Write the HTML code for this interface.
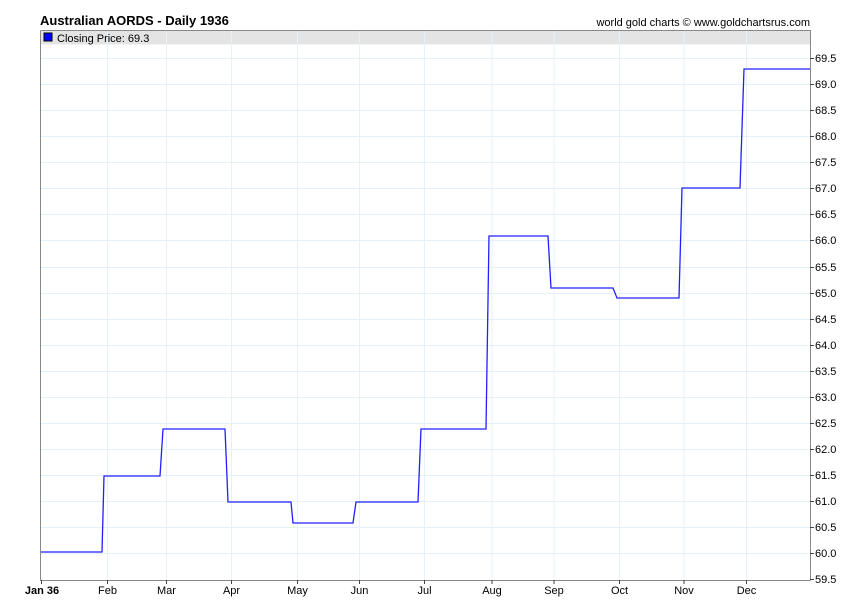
<!DOCTYPE html>
<html><head><meta charset="utf-8"><style>
html,body{margin:0;padding:0;background:#fff;}
svg{display:block;font-family:"Liberation Sans",Arial,sans-serif;}
</style></head><body>
<svg width="850" height="616" viewBox="0 0 850 616" xmlns="http://www.w3.org/2000/svg">
<rect width="850" height="616" fill="#fff"/>
<text x="40" y="25" font-size="13" font-weight="bold" fill="#000">Australian AORDS - Daily 1936</text>
<text x="810" y="26" font-size="11" text-anchor="end" fill="#000">world gold charts © www.goldchartsrus.com</text>
<rect x="40.5" y="30.5" width="770" height="14" fill="#e4e4e4"/>
<g stroke="#e6f0f8" stroke-width="1">
<line x1="107.5" y1="31" x2="107.5" y2="580"/><line x1="166.5" y1="31" x2="166.5" y2="580"/>
<line x1="231.5" y1="31" x2="231.5" y2="580"/><line x1="297.5" y1="31" x2="297.5" y2="580"/>
<line x1="359.5" y1="31" x2="359.5" y2="580"/><line x1="424.5" y1="31" x2="424.5" y2="580"/>
<line x1="492" y1="31" x2="492" y2="580"/><line x1="554" y1="31" x2="554" y2="580"/>
<line x1="619.5" y1="31" x2="619.5" y2="580"/><line x1="684" y1="31" x2="684" y2="580"/>
<line x1="746.5" y1="31" x2="746.5" y2="580"/>
</g>
<g stroke="#e6f0f8">
<line x1="41" y1="58.5" x2="810" y2="58.5"/><line x1="41" y1="84.5" x2="810" y2="84.5"/>
<line x1="41" y1="110.5" x2="810" y2="110.5"/><line x1="41" y1="136.5" x2="810" y2="136.5"/>
<line x1="41" y1="162.5" x2="810" y2="162.5"/><line x1="41" y1="188.5" x2="810" y2="188.5"/>
<line x1="41" y1="214.5" x2="810" y2="214.5"/><line x1="41" y1="240.5" x2="810" y2="240.5"/>
<line x1="41" y1="267.5" x2="810" y2="267.5"/><line x1="41" y1="293.5" x2="810" y2="293.5"/>
<line x1="41" y1="319.5" x2="810" y2="319.5"/><line x1="41" y1="345.5" x2="810" y2="345.5"/>
<line x1="41" y1="371.5" x2="810" y2="371.5"/><line x1="41" y1="397.5" x2="810" y2="397.5"/>
<line x1="41" y1="423.5" x2="810" y2="423.5"/><line x1="41" y1="449.5" x2="810" y2="449.5"/>
<line x1="41" y1="475.5" x2="810" y2="475.5"/><line x1="41" y1="501.5" x2="810" y2="501.5"/>
<line x1="41" y1="527.5" x2="810" y2="527.5"/><line x1="41" y1="553.5" x2="810" y2="553.5"/>
</g>
<path d="M40.5 30.5H810.5V580.5M40.5 30.5V580.5H810.5" fill="none" stroke="#888" stroke-width="1"/>
<rect x="44" y="33" width="8" height="8" fill="#0000ff" stroke="#000" stroke-width="1"/>
<text x="57" y="42" font-size="11" fill="#000">Closing Price: 69.3</text>
<path d="M41 552H102L104 476H160L163 429H225L228 502H291L293 523H353L356 502H418L421 429H486L489 236H548L551 288H613L617 298H679L682 188H740L744 69H810" fill="none" stroke="#2020ff" stroke-width="1.3"/>
<g stroke="#444" stroke-width="1">
<line x1="810" y1="58.5" x2="814" y2="58.5"/><line x1="810" y1="84.5" x2="814" y2="84.5"/>
<line x1="810" y1="110.5" x2="814" y2="110.5"/><line x1="810" y1="136.5" x2="814" y2="136.5"/>
<line x1="810" y1="162.5" x2="814" y2="162.5"/><line x1="810" y1="188.5" x2="814" y2="188.5"/>
<line x1="810" y1="214.5" x2="814" y2="214.5"/><line x1="810" y1="240.5" x2="814" y2="240.5"/>
<line x1="810" y1="267.5" x2="814" y2="267.5"/><line x1="810" y1="293.5" x2="814" y2="293.5"/>
<line x1="810" y1="319.5" x2="814" y2="319.5"/><line x1="810" y1="345.5" x2="814" y2="345.5"/>
<line x1="810" y1="371.5" x2="814" y2="371.5"/><line x1="810" y1="397.5" x2="814" y2="397.5"/>
<line x1="810" y1="423.5" x2="814" y2="423.5"/><line x1="810" y1="449.5" x2="814" y2="449.5"/>
<line x1="810" y1="475.5" x2="814" y2="475.5"/><line x1="810" y1="501.5" x2="814" y2="501.5"/>
<line x1="810" y1="527.5" x2="814" y2="527.5"/><line x1="810" y1="553.5" x2="814" y2="553.5"/>
<line x1="810" y1="579.5" x2="814" y2="579.5"/>
<line x1="41.5" y1="580" x2="41.5" y2="584"/><line x1="107.5" y1="580" x2="107.5" y2="584"/>
<line x1="166.5" y1="580" x2="166.5" y2="584"/><line x1="231.5" y1="580" x2="231.5" y2="584"/>
<line x1="297.5" y1="580" x2="297.5" y2="584"/><line x1="359.5" y1="580" x2="359.5" y2="584"/>
<line x1="424.5" y1="580" x2="424.5" y2="584"/><line x1="492" y1="580" x2="492" y2="584"/>
<line x1="554" y1="580" x2="554" y2="584"/><line x1="619.5" y1="580" x2="619.5" y2="584"/>
<line x1="684" y1="580" x2="684" y2="584"/><line x1="746.5" y1="580" x2="746.5" y2="584"/>
</g>
<g font-size="11" fill="#000">
<text x="815" y="62">69.5</text><text x="815" y="88">69.0</text><text x="815" y="114">68.5</text>
<text x="815" y="140">68.0</text><text x="815" y="166">67.5</text><text x="815" y="192">67.0</text>
<text x="815" y="218">66.5</text><text x="815" y="244">66.0</text><text x="815" y="271">65.5</text>
<text x="815" y="297">65.0</text><text x="815" y="323">64.5</text><text x="815" y="349">64.0</text>
<text x="815" y="375">63.5</text><text x="815" y="401">63.0</text><text x="815" y="427">62.5</text>
<text x="815" y="453">62.0</text><text x="815" y="479">61.5</text><text x="815" y="505">61.0</text>
<text x="815" y="531">60.5</text><text x="815" y="557">60.0</text><text x="815" y="583">59.5</text>
</g>
<g font-size="11" fill="#000" text-anchor="middle">
<text x="42" y="594" font-weight="bold">Jan 36</text>
<text x="107.5" y="594">Feb</text><text x="166.5" y="594">Mar</text><text x="231.5" y="594">Apr</text>
<text x="297.5" y="594">May</text><text x="359.5" y="594">Jun</text><text x="424.5" y="594">Jul</text>
<text x="492" y="594">Aug</text><text x="554" y="594">Sep</text><text x="619.5" y="594">Oct</text>
<text x="684" y="594">Nov</text><text x="746.5" y="594">Dec</text>
</g>
</svg>
</body></html>
